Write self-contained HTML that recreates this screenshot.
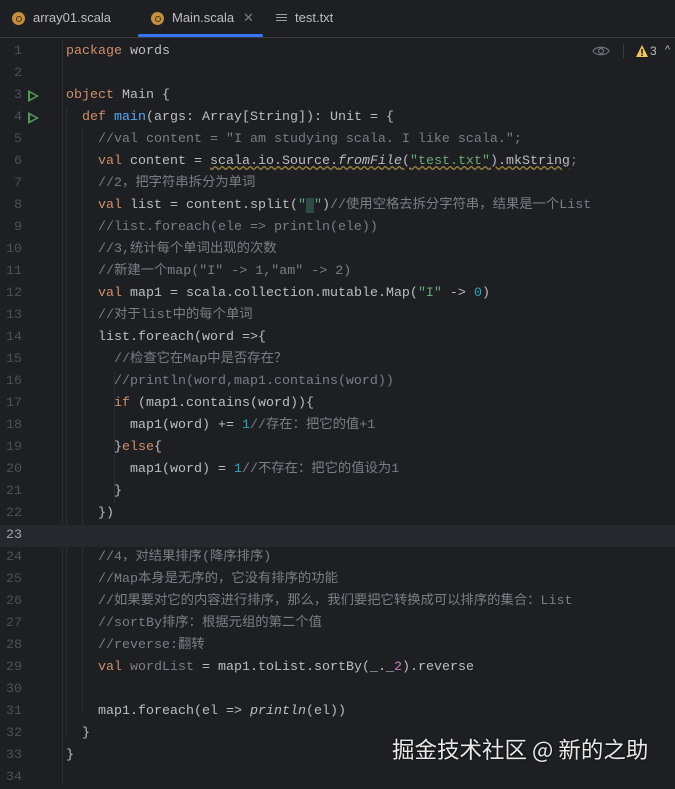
<!DOCTYPE html>
<html><head><meta charset="utf-8"><style>
*{margin:0;padding:0;box-sizing:border-box}
body{width:675px;height:784px;background:#1e1f22;overflow:hidden;position:relative;font-family:"Liberation Sans","Noto Sans CJK SC",sans-serif}
.tabs{position:absolute;left:0;top:0;width:675px;height:38px;border-bottom:1px solid #393b40;background:#1e1f22}
.tab{position:absolute;top:10px;font-size:13px;color:#bcbec4}
.ic{position:absolute;top:12px;width:13px;height:13px;border-radius:50%;background:#c48f3e}
.ic:after{content:"";position:absolute;left:3.5px;top:3.5px;width:6px;height:6px;border-radius:50%;border:1.3px solid #4a3415;box-sizing:border-box}
.code{position:absolute;left:0;top:41px;width:675px;font-family:"Liberation Mono","Noto Sans CJK SC",monospace;font-size:13.33px}
.l{height:22px;line-height:22px;position:relative;white-space:pre;color:#bcbec4}
.n{position:absolute;left:0;width:22px;text-align:right;color:#4b5059}
.t{position:absolute;left:66px}
.k{color:#cf8e6d}.c{color:#7a7e85}.s{color:#6aab73}.num{color:#2aacb8}.f{color:#56a8f5}.g{color:#7a7e85}
.i{font-style:italic}
.cur{background:#26282e}.cur .n{color:#a1a3ab}
.run{position:absolute;left:28px;top:5px;width:0;height:0;border-left:11px solid #4f9a57;border-top:6px solid transparent;border-bottom:6px solid transparent}
.run:after{content:"";position:absolute;left:-9px;top:-3.5px;border-left:6px solid #1e1f22;border-top:3.5px solid transparent;border-bottom:3.5px solid transparent}
.guide{position:absolute;width:1px;background:#2c2e33}
.wm{position:absolute;left:392px;top:733px;font-size:22.5px;color:#e8e8e8;font-family:"Noto Sans CJK SC",sans-serif;text-shadow:0 0 2px #000}
</style></head><body>
<div class="tabs">
 <div class="ic" style="left:12px"></div><div class="tab" style="left:33px">array01.scala</div>
 <div class="ic" style="left:151px"></div><div class="tab" style="left:172px">Main.scala</div>
 <div class="tab" style="left:243px;color:#7a7e85">✕</div>
 <div style="position:absolute;left:138px;top:34px;width:125px;height:3px;border-radius:2px;background:#3574f0"></div>
 <div style="position:absolute;left:276px;top:14px;width:11px;height:1.3px;background:#9da0a8;box-shadow:0 3px 0 #9da0a8,0 6px 0 #9da0a8"></div>
 <div class="tab" style="left:295px">test.txt</div>
</div>
<div class="guide" style="left:62px;top:39px;height:745px;background:#2b2d30"></div>
<div class="guide" style="left:66px;top:107px;height:628px"></div>
<div class="guide" style="left:82px;top:129px;height:584px"></div>
<div class="guide" style="left:114px;top:371px;height:132px"></div>
<svg style="position:absolute;left:592px;top:45px" width="18" height="12" viewBox="0 0 18 12"><path d="M1 6C4 1 14 1 17 6C14 11 4 11 1 6Z" fill="none" stroke="#6f737a" stroke-width="1.2"/><circle cx="9" cy="6" r="2.5" fill="none" stroke="#6f737a" stroke-width="1.2"/></svg>
<div style="position:absolute;left:623px;top:44px;width:1px;height:14px;background:#393b40"></div>
<svg style="position:absolute;left:636px;top:45px" width="12" height="12" viewBox="0 0 12 12"><path d="M6 0L12 12H0Z" fill="#f2c55c"/><rect x="5.2" y="4" width="1.6" height="4.5" fill="#1e1f22"/><rect x="5.2" y="9.5" width="1.6" height="1.5" fill="#1e1f22"/></svg>
<div style="position:absolute;left:650px;top:44px;color:#bcbec4;font-size:12px">3</div>
<div style="position:absolute;left:665px;top:44px;color:#bcbec4;font-size:11px">^</div>
<div class="code">
<div class="l"><span class="n">1</span><span class="t"><span class="k">package</span> words</span></div>
<div class="l"><span class="n">2</span></div>
<div class="l"><span class="n">3</span><span class="run"></span><span class="t"><span class="k">object</span> Main {</span></div>
<div class="l"><span class="n">4</span><span class="run"></span><span class="t">  <span class="k">def</span> <span class="f">main</span>(args: Array[String]): Unit = {</span></div>
<div class="l"><span class="n">5</span><span class="t c">    //val content = "I am studying scala. I like scala.";</span></div>
<div class="l"><span class="n">6</span><span class="t">    <span class="k">val</span> content = <span style="text-decoration:underline wavy #a08640">scala.io.Source.<span class="i">fromFile</span>(<span class="s">"test.txt"</span>).mkString</span><span class="c">;</span></span></div>
<div class="l"><span class="n">7</span><span class="t c">    //2，把字符串拆分为单词</span></div>
<div class="l"><span class="n">8</span><span class="t">    <span class="k">val</span> list = content.split(<span class="s">"<span style="background:#2e4a45"> </span>"</span>)<span class="c">//使用空格去拆分字符串，结果是一个List</span></span></div>
<div class="l"><span class="n">9</span><span class="t c">    //list.foreach(ele =&gt; println(ele))</span></div>
<div class="l"><span class="n">10</span><span class="t c">    //3,统计每个单词出现的次数</span></div>
<div class="l"><span class="n">11</span><span class="t c">    //新建一个map("I" -&gt; 1,"am" -&gt; 2)</span></div>
<div class="l"><span class="n">12</span><span class="t">    <span class="k">val</span> map1 = scala.collection.mutable.Map(<span class="s">"I"</span> -&gt; <span class="num">0</span>)</span></div>
<div class="l"><span class="n">13</span><span class="t c">    //对于list中的每个单词</span></div>
<div class="l"><span class="n">14</span><span class="t">    list.foreach(word =&gt;{</span></div>
<div class="l"><span class="n">15</span><span class="t c">      //检查它在Map中是否存在？</span></div>
<div class="l"><span class="n">16</span><span class="t c">      //println(word,map1.contains(word))</span></div>
<div class="l"><span class="n">17</span><span class="t">      <span class="k">if</span> (map1.contains(word)){</span></div>
<div class="l"><span class="n">18</span><span class="t">        map1(word) += <span class="num">1</span><span class="c">//存在：把它的值+1</span></span></div>
<div class="l"><span class="n">19</span><span class="t">      }<span class="k">else</span>{</span></div>
<div class="l"><span class="n">20</span><span class="t">        map1(word) = <span class="num">1</span><span class="c">//不存在：把它的值设为1</span></span></div>
<div class="l"><span class="n">21</span><span class="t">      }</span></div>
<div class="l"><span class="n">22</span><span class="t">    })</span></div>
<div class="l cur"><span class="n">23</span></div>
<div class="l"><span class="n">24</span><span class="t c">    //4，对结果排序(降序排序)</span></div>
<div class="l"><span class="n">25</span><span class="t c">    //Map本身是无序的，它没有排序的功能</span></div>
<div class="l"><span class="n">26</span><span class="t c">    //如果要对它的内容进行排序，那么，我们要把它转换成可以排序的集合：List</span></div>
<div class="l"><span class="n">27</span><span class="t c">    //sortBy排序：根据元组的第二个值</span></div>
<div class="l"><span class="n">28</span><span class="t c">    //reverse:翻转</span></div>
<div class="l"><span class="n">29</span><span class="t">    <span class="k">val</span> <span class="g">wordList</span> = map1.toList.sortBy(_._<span style="color:#c77dbb">2</span>).reverse</span></div>
<div class="l"><span class="n">30</span></div>
<div class="l"><span class="n">31</span><span class="t">    map1.foreach(el =&gt; <span class="i">println</span>(el))</span></div>
<div class="l"><span class="n">32</span><span class="t">  }</span></div>
<div class="l"><span class="n">33</span><span class="t">}</span></div>
<div class="l"><span class="n">34</span></div>
</div>
<div class="wm">掘金技术社区 @ 新的之助</div>
</body></html>
